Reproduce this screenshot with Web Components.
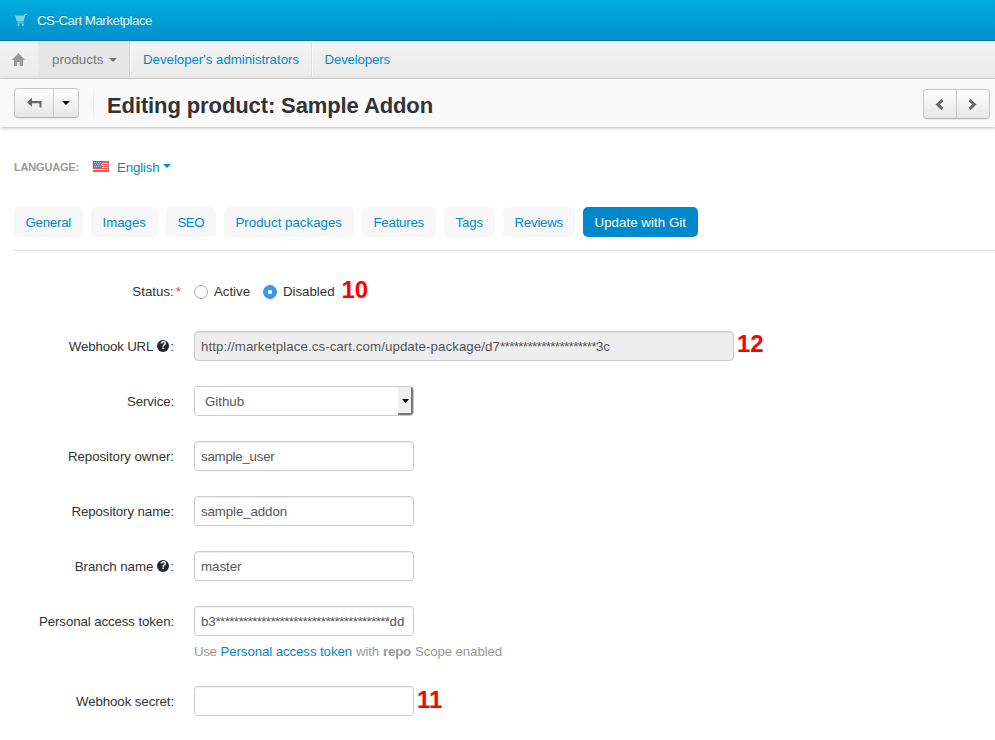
<!DOCTYPE html>
<html lang="en">
<head>
<meta charset="utf-8">
<title>Editing product: Sample Addon</title>
<style>
html,body{margin:0;padding:0}
body{width:995px;height:740px;overflow:hidden;background:#fff;color:#333;font:13.3px/20px "Liberation Sans",Arial,sans-serif}
</style>
</head>
<body>
<admin-page></admin-page>
<script>
// Text tracked so that it fills the width given in the "w" attribute.
class FitText extends HTMLElement{
  connectedCallback(){
    const root=this.attachShadow({mode:'open'});
    root.innerHTML='<style>:host{display:inline-block;white-space:pre;width:var(--w)}span{display:inline}</style><span></span>';
    const span=root.querySelector('span'),text=this.textContent,w=+this.getAttribute('w');
    span.textContent=text;
    this.style.setProperty('--w',w+'px');
    span.style.letterSpacing=(w-span.getBoundingClientRect().width)/text.length+'px';
  }
}

const define=(name,html)=>customElements.define(name,class extends HTMLElement{
  connectedCallback(){
    if(this.shadowRoot)return;
    const t=document.createElement('template');
    t.innerHTML=typeof html==='function'?html(this):html;
    this.attachShadow({mode:'open'}).append(t.content.cloneNode(true));
  }
});

define('drop-caret',`<style>:host{display:inline-block;width:0;height:0;border:4px solid transparent;border-top-color:currentColor;border-bottom:0}</style>`);

define('brand-bar',`<style>
:host{display:flex;align-items:center;box-sizing:border-box;height:41px;padding-left:15px;background:linear-gradient(#00acdb,#0090cb);border-bottom:1px solid #0079ab;color:#e8f7fc;text-shadow:0 -1px 0 rgba(0,70,110,.25)}
svg{margin-right:10px}
fit-text{line-height:18px;padding-top:1px}
</style>
<svg width="12" height="12" viewBox="0 0 12 12" fill="#7fd0ec"><path d="M0 1.4h9L9.5 0H12v1h-1.7L8.6 7.6H1.8z"/><path d="M2.4 8.4h6.2v1H2.4z"/><circle cx="3.5" cy="10.8" r="1.1"/><circle cx="7.9" cy="10.8" r="1.1"/></svg>
<fit-text w="115">CS-Cart Marketplace</fit-text>`);

define('main-nav',`<style>
:host{display:flex;box-sizing:border-box;height:38px;background:linear-gradient(#f4f4f4,#ebebeb);border-bottom:1px solid #d8d8d8;color:#08c}
div{display:flex;align-items:center;box-sizing:border-box;height:37px}
.home{width:38px;padding-left:12px}
.on{width:92px;padding-left:14px;height:36px;padding-top:1px;color:#777;background:linear-gradient(#dfdfdf,#e6e6e6 5px,#e6e6e6);border-right:1px solid #d3d3d3;box-shadow:1px 0 #fafafa}
.on drop-caret{margin-left:5px}
.adm{width:182px;padding-left:13px;height:36px;padding-top:1px;border-right:1px solid #dedede;box-shadow:1px 0 #fafafa}
.dev{padding-left:12.5px}
</style>
<div class="home"><svg width="13" height="13" viewBox="0 0 13 13" fill="#999"><path d="M6.5 0 13 7h-2v6H7.8V9H5.2v4H2V7H0z"/></svg></div>
<div class="on"><fit-text w="51.5">products</fit-text><drop-caret></drop-caret></div>
<div class="adm"><fit-text w="156">Developer's administrators</fit-text></div>
<div class="dev"><fit-text w="65.5">Developers</fit-text></div>`);

define('button-pair',`<style>
:host{display:flex;box-sizing:border-box;height:30px;border:1px solid #c8c8c8;border-bottom-color:#b4b4b4;border-radius:4px;background:linear-gradient(#fff,#e6e6e6);box-shadow:inset 0 1px 0 #fff,0 1px 1px rgba(0,0,0,.06)}
::slotted(*){display:flex;align-items:center;justify-content:center}
::slotted(:first-child){border-right:1px solid #c8c8c8}
</style><slot></slot>`);

define('title-bar',`<style>
:host{display:flex;box-sizing:border-box;height:48px;padding:9px 5px 0 14px;background:#f9f9f9;box-shadow:0 1px 4px rgba(0,0,0,.28);position:relative}
.back{width:65px}.back span{color:#000}
hr{width:1px;height:36px;margin:-3px 13px 0 14px;border:0;background:linear-gradient(#f9f9f9,#e4e4e4,#f9f9f9)}
h1{margin:3px 0 0;font-size:22px;line-height:30px;font-weight:bold}
.pager{width:67px;margin:1px 0 0 auto}
.pager svg{margin-right:1px}
</style>
<button-pair class="back"><span style="width:38px"><svg style="margin-top:-2px" width="15" height="11" viewBox="0 0 15 11" fill="#666"><path d="M0 5.3 5 .8V4h9.5v6.5h-2V6.2H5v3.6z"/></svg></span><span style="width:24px"><drop-caret></drop-caret></span></button-pair>
<hr><h1><fit-text w="326">Editing product: Sample Addon</fit-text></h1>
<button-pair class="pager"><span style="width:32px"><svg width="9" height="11" viewBox="0 0 9 11" fill="none" stroke="#666" stroke-width="3"><path d="M7.4 1.1 2.7 5.5l4.7 4.4"/></svg></span><span style="width:32px"><svg width="9" height="11" viewBox="0 0 9 11" fill="none" stroke="#666" stroke-width="3"><path d="M1.6 1.1l4.7 4.4-4.7 4.4"/></svg></span></button-pair>`);

define('language-picker',`<style>
:host{display:flex;align-items:center;height:20px;padding:30px 0 0 14px}
.l{font-size:11px;font-weight:bold;color:#999;margin-right:14px}
svg{margin:-1px 8px 0 0}
.e{color:#08c;display:flex;align-items:center;padding-top:1px}
drop-caret{margin:-3px 0 0 3.5px}
</style><fit-text class="l" w="65">LANGUAGE:</fit-text>
<svg width="16" height="11" viewBox="0 0 16 11" fill="none" shape-rendering="crispEdges"><path fill="#fff" d="M0 0h16v11H0z"/><path stroke="#f0524a" d="M0 1.5h16M0 3.5h16M0 5.5h16M0 7.5h16M0 9.5h16"/><path fill="#5779cf" d="M0 0h9v7H0z"/><path stroke="#c9d6f5" stroke-dasharray="1 1" d="M1 1.5h8M2 3.5h7M1 5.5h8"/><path stroke="#d9675f" d="M9 .5h6.5v10H0"/><path stroke="#4c66b8" d="M.5 7V.5H9"/></svg>
<span class="e"><fit-text w="42.5">English</fit-text><drop-caret></drop-caret></span>`);

define('tab-item',el=>`<style>
:host{display:block;box-sizing:border-box;height:30px;padding:6px 0 0 11.5px;border-radius:5px;background:#f7f7f7;color:#08c;line-height:19px}
:host([active]){background:#08c;color:#fff}
</style><fit-text w="${el.getAttribute('w')-23.5}">${el.textContent}</fit-text>`);

define('tab-row',`<style>
:host{display:flex;gap:8px;margin:30px 0 0 14px;padding-bottom:13px;border-bottom:1px solid #ddd}
tab-item{flex:none}
</style>`+[['General',69],['Images',67],['SEO',50],['Product packages',130],['Features',74],['Tags',51],['Reviews',72],['Update with Git',115,'active']]
 .map(([t,w,a=''])=>`<tab-item w="${w}" style="width:${w}px" ${a}>${t}</tab-item>`).join(''));

define('help-mark',`<style>:host{display:inline-flex;vertical-align:-1px;align-items:center;justify-content:center;overflow:hidden;width:12px;height:12px;border-radius:50%;background:#262626;color:#fff;font:bold 10px/12px "Liberation Sans",Arial,sans-serif}</style>?`);

// Label column and control column; "w" is the label's text width.
define('form-row',el=>`<style>
:host{display:flex;height:30px}
:host([tall]){height:55px}
.label{display:flex;justify-content:flex-end;flex:none;width:174px;margin-right:20px;line-height:20px;padding-top:6px;box-sizing:border-box;white-space:nowrap}
help-mark{margin:3px 1px 0 4px}
.c{display:flex;flex-wrap:wrap;align-content:flex-start;flex:1}
i{font-style:normal;color:#e33;margin-left:2px}
:host([required]) .label{width:181px;margin-right:13px}
</style><div class="label"><fit-text w="${el.getAttribute('w')}">${el.getAttribute('label')}${el.hasAttribute('help')?'':':'}</fit-text>${el.hasAttribute('help')?'<help-mark></help-mark>:':''}${el.hasAttribute('required')?'<i>*</i>':''}</div><div class="c"><slot></slot></div>`);

define('text-box',`<style>
:host{display:flex;align-items:center;box-sizing:border-box;width:220px;height:30px;padding:2px 0 0 6px;border:1px solid #ccc;border-radius:4px;background:#fff;color:#555;box-shadow:inset 0 1px 1px rgba(0,0,0,.075)}
:host([readonly]){width:540px;background:#eee}
</style><slot></slot>`);

define('select-box',`<style>
:host{display:flex;align-items:center;justify-content:space-between;box-sizing:border-box;width:220px;height:30px;padding-left:10px;border:1px solid #ccc;border-radius:4px;background:#fff;color:#555}
::slotted(fit-text){padding-top:2px}
b{display:flex;align-items:center;justify-content:center;box-sizing:border-box;width:15px;height:28px;background:#f0f0f0;border:solid #777;border-width:0 2px 2px 0;border-radius:0 2px 3px 0;color:#000}
svg{margin:2px 0 0 1px}
</style><slot></slot><b><svg width="7" height="4" viewBox="0 0 7 4"><path d="M0 0h7L3.5 4z"/></svg></b>`);

define('radio-dot',`<style>
:host{display:block;box-sizing:border-box;width:14px;height:14px;border:1px solid #aaa;border-radius:50%;background:linear-gradient(#fff,#fafafa);margin:9px 6px 0 0}
:host([checked]){border-color:#3489e8;background:radial-gradient(circle,#fff 0 1.8px,#3b99fc 2.5px)}
</style>`);

define('step-note',`<style>:host{display:block;color:#f00;font-size:24px;font-weight:bold;line-height:28px}</style><slot></slot>`);

define('git-form',`<style>
:host{display:flex;flex-direction:column;gap:25px;padding-top:25px}
.r{line-height:32px}
.hint{width:100%;margin-top:6px;color:#999;display:flex;height:19px}
.hint .a{color:#08c;margin:0 4px}.hint .b{font-weight:bold;margin:0 4px}
.n{margin-left:3px}
</style>
<form-row label="Status" w="41.5" required><radio-dot></radio-dot><fit-text class="r" w="36">Active</fit-text><radio-dot checked style="margin-left:13px"></radio-dot><fit-text class="r" w="51.5">Disabled</fit-text><step-note style="margin-left:7px">10</step-note></form-row>
<form-row label="Webhook URL" w="84.5" help><text-box readonly><fit-text w="299">http://marketplace.cs-cart.com/update-package/d7</fit-text><fit-text w="96">*********************</fit-text><fit-text w="14">3c</fit-text></text-box><step-note class="n" style="margin-top:-1px">12</step-note></form-row>
<form-row label="Service" w="47"><select-box><fit-text w="39">Github</fit-text></select-box></form-row>
<form-row label="Repository owner" w="106"><text-box><fit-text w="73.5">sample_user</fit-text></text-box></form-row>
<form-row label="Repository name" w="102.5"><text-box><fit-text w="86">sample_addon</fit-text></text-box></form-row>
<form-row label="Branch name" w="78.5" help><text-box><fit-text w="40.5">master</fit-text></text-box></form-row>
<form-row tall label="Personal access token" w="135"><text-box><fit-text w="14.5">b3</fit-text><fit-text w="174">**************************************</fit-text><fit-text w="15">dd</fit-text></text-box><div class="hint"><fit-text w="22.5">Use</fit-text><fit-text class="a" w="131.5">Personal access token</fit-text><fit-text w="23">with</fit-text><fit-text class="b" w="28">repo</fit-text><fit-text w="87">Scope enabled</fit-text></div></form-row>
<form-row label="Webhook secret" w="98"><text-box></text-box><step-note class="n">11</step-note></form-row>`);

define('admin-page',`<style>:host{display:block;width:995px}</style><brand-bar></brand-bar><main-nav></main-nav><title-bar></title-bar><language-picker></language-picker><tab-row></tab-row><git-form></git-form>`);

customElements.define('fit-text',FitText);
</script>
</body>
</html>
